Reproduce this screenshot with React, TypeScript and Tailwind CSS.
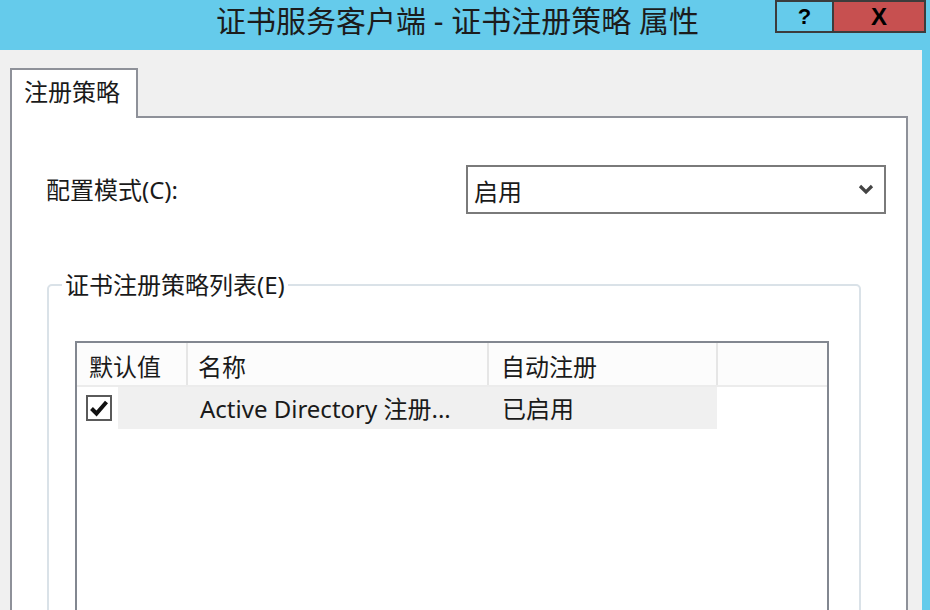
const ui = { fontFamily: '"Noto Sans", "Noto Sans CJK SC", sans-serif' };

function CheckBox() {
  return (
    <span className="flex h-[26px] w-[26px] items-center justify-center border-2 border-[#5a5a5a] bg-white">
      <svg width="20" height="18" viewBox="0 0 20 18" aria-hidden>
        <path d="M2.5 9.5 L7.5 14.5 L17.5 3" fill="none" stroke="#111" strokeWidth="4" />
      </svg>
    </span>
  );
}

export default function App() {
  return (
    <div
      className="flex h-[610px] w-[930px] flex-col overflow-hidden bg-[#65cbeb] text-[24px] text-[#1a1a1a]"
      style={ui}
    >
      {/* title bar */}
      <div className="flex h-[50px] shrink-0 items-start">
        <div className="pl-[216px] pt-[1px] text-[30px] leading-[40px] text-[#1c1c1c]">
          证书服务客户端 - 证书注册策略 属性
        </div>
        <div className="ml-auto mr-[4px] flex h-[33px] border-2 border-[#3c3c3c]">
          <span className="flex w-[55px] items-center justify-center font-['Liberation_Sans'] text-[22px] font-bold text-black">
            ?
          </span>
          <span className="flex w-[92px] items-center justify-center border-l-2 border-[#3c3c3c] bg-[#c75050] font-['Liberation_Sans'] text-[24px] font-bold text-black">
            X
          </span>
        </div>
      </div>

      {/* dialog body */}
      <div className="mr-[8px] flex flex-1 flex-col bg-[#f0f0f0] pl-[10px] pt-[18px]">
        <div className="relative z-10 -mb-[2px] flex h-[50px] w-[128px] border-2 border-b-0 border-[#8e9199] bg-white pl-[12px] pt-[6px] leading-[32px]">
          注册策略
        </div>
        <div className="flex w-[898px] flex-1 flex-col border-2 border-[#8e9199] bg-white">
          <div className="flex items-center pl-[34px] pr-[20px] pt-[47px]">
            <span className="flex-1">配置模式(C):</span>
            <div className="flex h-[49px] w-[420px] items-center justify-between border-2 border-[#7a7a7a] pl-[6px] pr-[10px]">
              <span className="pt-[4px]">启用</span>
              <svg width="16" height="11" viewBox="0 0 16 11" aria-hidden>
                <path d="M2 2 L8 8 L14 2" fill="none" stroke="#444" strokeWidth="3.2" />
              </svg>
            </div>
          </div>

          <fieldset className="ml-[35px] mr-[45px] mt-[55px] flex-1 rounded-[5px] border-2 border-[#dae2e8] pl-[26px] pr-[30px]">
            <legend className="-ml-[13px] px-[3px] leading-[32px]">证书注册策略列表(E)</legend>
            <div className="mt-[40px] h-[400px] border-2 border-[#828790] bg-white">
              <div className="flex h-[44px] border-b-2 border-[#ececec] bg-[#fcfcfc]">
                <div className="flex w-[111px] items-center border-r-2 border-[#e6e6e6] pl-[12px] pt-[5px]">默认值</div>
                <div className="flex w-[301px] items-center border-r-2 border-[#e6e6e6] pl-[10px] pt-[5px]">名称</div>
                <div className="flex w-[229px] items-center border-r-2 border-[#e6e6e6] pl-[12px] pt-[5px]">自动注册</div>
                <div className="flex-1" />
              </div>
              <div className="flex h-[42px]">
                <div className="flex w-[41px] items-center pl-[9px]">
                  <CheckBox />
                </div>
                <div className="flex w-[599px] items-center bg-[#f0f0f0] pt-[2px]">
                  <span className="w-[371px] pl-[82px]">Active Directory 注册...</span>
                  <span className="pl-[13px]">已启用</span>
                </div>
              </div>
            </div>
          </fieldset>
        </div>
      </div>
    </div>
  );
}
